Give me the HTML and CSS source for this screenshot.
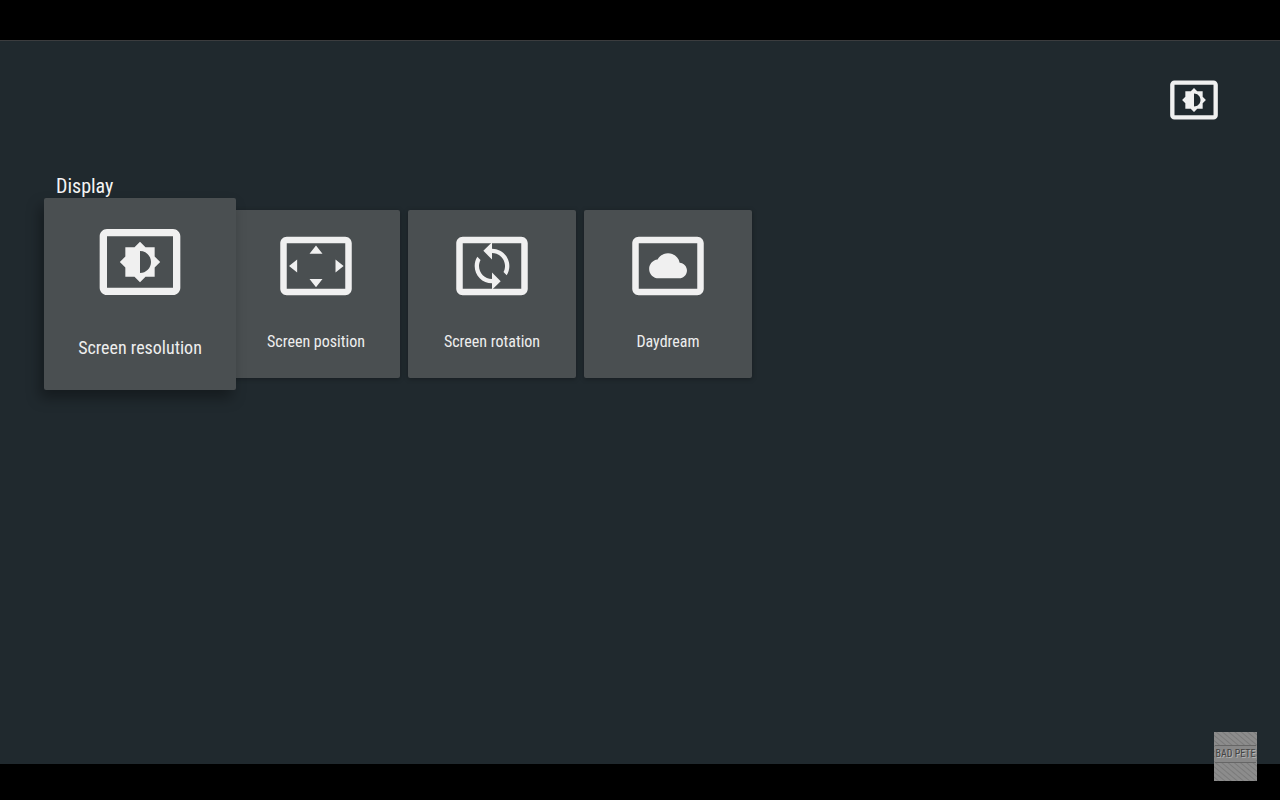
FILE: index.html
```html
<!DOCTYPE html>
<html lang="en">
<head>
  <meta charset="UTF-8">
  <title>Display</title>
  <link rel="stylesheet" href="styles.css">
</head>
<body>
  <main class="screen">
    <header class="screen__header">
      <svg class="screen__icon" viewBox="0 0 24 24" aria-hidden="true">
        <path d="M21 3H3c-1.1 0-2 .9-2 2v14c0 1.1.9 2 2 2h18c1.1 0 2-.9 2-2V5c0-1.1-.9-2-2-2zm0 16H3V5h18v14zM8 16h2.500l1.500 1.500 1.500-1.500H16v-2.500l1.500-1.500-1.500-1.500V8h-2.500L12 6.500 10.500 8H8v2.500L6.500 12 8 13.500V16zm4-7c1.660 0 3 1.340 3 3s-1.340 3-3 3V9z"/>
      </svg>
    </header>

    <section class="row">
      <h1 class="row__title">Display</h1>
      <div class="row__cards">
        <button type="button" class="card card--focused">
          <svg class="card__icon" viewBox="0 0 24 24" aria-hidden="true">
            <path d="M21 3H3c-1.1 0-2 .9-2 2v14c0 1.1.9 2 2 2h18c1.1 0 2-.9 2-2V5c0-1.1-.9-2-2-2zm0 16H3V5h18v14zM8 16h2.500l1.500 1.500 1.500-1.500H16v-2.500l1.500-1.500-1.500-1.500V8h-2.500L12 6.500 10.500 8H8v2.500L6.500 12 8 13.500V16zm4-7c1.660 0 3 1.340 3 3s-1.340 3-3 3V9z"/>
          </svg>
          <span class="card__label">Screen resolution</span>
        </button>
        <button type="button" class="card">
          <svg class="card__icon" viewBox="0 0 24 24" aria-hidden="true">
            <path d="M21 3H3c-1.1 0-2 .9-2 2v14c0 1.1.9 2 2 2h18c1.1 0 2-.9 2-2V5c0-1.1-.9-2-2-2zm0 16H3V5h18v14zM12 5.700L10 8.200h4zM18 10v4l2.500-2zM6.200 10l-2.500 2 2.500 2zM14 16h-4l2 2.500z"/>
          </svg>
          <span class="card__label">Screen position</span>
        </button>
        <button type="button" class="card">
          <svg class="card__icon" viewBox="0 0 24 24" aria-hidden="true">
            <path d="M21 3H3c-1.1 0-2 .9-2 2v14c0 1.1.9 2 2 2h18c1.1 0 2-.9 2-2V5c0-1.1-.9-2-2-2zm0 16H3V5h18v14z"/>
            <path transform="translate(4 4) scale(.667)" d="M12 4V1L8 5l4 4V6c3.310 0 6 2.690 6 6 0 1.010-.25 1.970-.7 2.800l1.460 1.460C19.540 15.030 20 13.570 20 12c0-4.420-3.580-8-8-8zm0 14c-3.310 0-6-2.690-6-6 0-1.010.25-1.970.7-2.800L5.240 7.740C4.460 8.970 4 10.430 4 12c0 4.420 3.580 8 8 8v3l4-4-4-4v3z"/>
          </svg>
          <span class="card__label">Screen rotation</span>
        </button>
        <button type="button" class="card">
          <svg class="card__icon" viewBox="0 0 24 24" aria-hidden="true">
            <path d="M21 3H3c-1.1 0-2 .9-2 2v14c0 1.1.9 2 2 2h18c1.1 0 2-.9 2-2V5c0-1.1-.9-2-2-2zm0 16H3V5h18v14z"/>
            <path transform="translate(6.200 6.100) scale(.485)" d="M19.350 10.040C18.670 6.590 15.640 4 12 4 9.110 4 6.600 5.640 5.350 8.040 2.340 8.360 0 10.910 0 14c0 3.310 2.690 6 6 6h13c2.760 0 5-2.240 5-5 0-2.640-2.050-4.780-4.650-4.960z"/>
          </svg>
          <span class="card__label">Daydream</span>
        </button>
      </div>
    </section>
  </main>

  <div class="watermark"><span class="watermark__text">BAD PETE</span></div>
</body>
</html>
```
FILE: styles.css
```css
html {
  box-sizing: border-box;
  background: #000;
}

*, *:before, *:after {
  box-sizing: inherit;
}

body {
  position: relative;
  display: flex;
  flex-direction: column;
  min-height: 100vh;
  margin: 0;
  padding: 40px 0 36px;
  font-family: 'Roboto Condensed', 'Liberation Sans Narrow', Roboto, sans-serif;
  color: #f4f4f4;
}

.screen {
  flex: 1;
  background: #20292e;
  border-top: 1px solid #3b3c3e;
}

.screen__header {
  display: flex;
  justify-content: flex-end;
  padding: 33px 60px 0;
}

.screen__icon {
  width: 52px;
  height: 52px;
  fill: #f0f0f0;
}

/* Card row */
.row {
  padding: 48px 56px 0;
}

.row__title {
  margin: 0 0 12px;
  font-size: 20px;
  font-weight: 400;
  line-height: 24px;
}

.row__cards {
  display: flex;
  flex-wrap: wrap;
  gap: 8px;
}

.card {
  display: flex;
  flex-direction: column;
  align-items: center;
  width: 168px;
  height: 168px;
  padding: 17px 0 0;
  border: 0;
  border-radius: 2px;
  background: #4a4f51;
  box-shadow: 0 1px 5px rgba(0,0,0,0.3);
  color: #eee;
  font-family: inherit;
  font-size: 16px;
  line-height: 20px;
  cursor: pointer;
}

.card__icon {
  width: 78px;
  height: 78px;
  margin-bottom: 27px;
  fill: #f0f0f0;
}

/* The focused card grows over its neighbours */
.card--focused {
  z-index: 1;
  width: 192px;
  height: 192px;
  margin: -12px;
  padding-top: 20px;
  box-shadow: -4px 8px 14px rgba(0,0,0,0.35);
  font-size: 18px;
  outline: 0;
}

.card--focused .card__icon {
  width: 88px;
  height: 88px;
  margin-bottom: 32px;
}

.watermark {
  position: absolute;
  right: 23px;
  bottom: 19px;
  display: flex;
  align-items: flex-start;
  justify-content: center;
  width: 43px;
  height: 49px;
  padding-top: 13px;
  background: repeating-linear-gradient(40deg, #8c8c8c 0, #8c8c8c 2px, #7a7a7a 3px, #8c8c8c 4px);
}

.watermark__text {
  padding: 1px 0;
  border-top: 1px solid #666;
  border-bottom: 1px solid #666;
  background: #888;
  color: #444;
  font-size: 10px;
  line-height: 14px;
  text-shadow: 1px 1px 0 #b5b5b5;
  white-space: nowrap;
}
```
